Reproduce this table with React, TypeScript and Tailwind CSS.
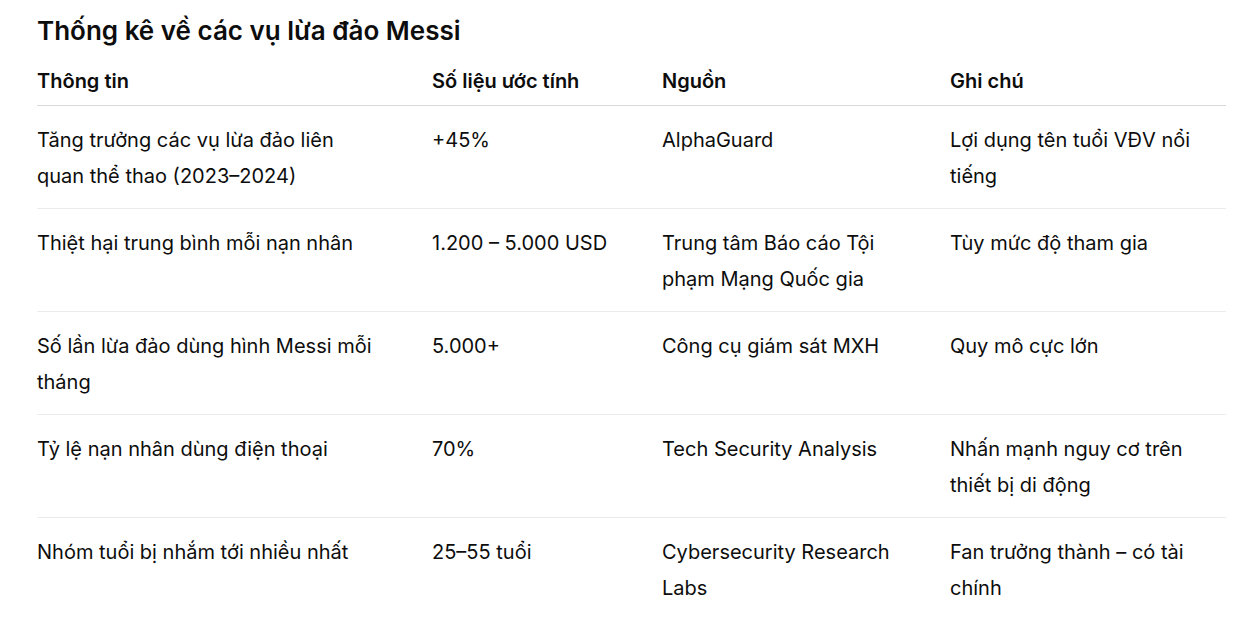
import React from 'react';

const rows = [
  ['Tăng trưởng các vụ lừa đảo liên quan thể thao (2023–2024)', '+45%', 'AlphaGuard', 'Lợi dụng tên tuổi VĐV nổi tiếng'],
  ['Thiệt hại trung bình mỗi nạn nhân', '1.200 – 5.000 USD', 'Trung tâm Báo cáo Tội phạm Mạng Quốc gia', 'Tùy mức độ tham gia'],
  ['Số lần lừa đảo dùng hình Messi mỗi tháng', '5.000+', 'Công cụ giám sát MXH', 'Quy mô cực lớn'],
  ['Tỷ lệ nạn nhân dùng điện thoại', '70%', 'Tech Security Analysis', 'Nhấn mạnh nguy cơ trên thiết bị di động'],
  ['Nhóm tuổi bị nhắm tới nhiều nhất', '25–55 tuổi', 'Cybersecurity Research Labs', 'Fan trưởng thành – có tài chính'],
];

const cols = 'grid grid-cols-[395px_230px_288px_276px]';

export default function App() {
  return (
    <div className="min-h-screen bg-white pl-[37px] pr-[26px] pt-[13px] text-[#0d0d0d] font-['Inter',sans-serif]">
      <h2 className="text-[26px] leading-[36px] font-semibold">Thống kê về các vụ lừa đảo Messi</h2>
      <div className="mt-[14px] w-[1189px]">
        <div className={`${cols} border-b border-[#d9d9d9] pb-[6px] text-[20px] leading-[36px] font-semibold`}>
          <div>Thông tin</div>
          <div>Số liệu ước tính</div>
          <div>Nguồn</div>
          <div>Ghi chú</div>
        </div>
        {rows.map((r, i) => (
          <div
            key={i}
            className={`${cols} ${i < rows.length - 1 ? 'border-b border-[#ececec]' : ''} pt-[16px] pb-[14px] text-[20px] leading-[36px] min-h-[103px]`}
          >
            {r.map((c, j) => (
              <div key={j} className={j === 0 ? 'pr-[50px]' : 'pr-[24px]'}>{c}</div>
            ))}
          </div>
        ))}
      </div>
    </div>
  );
}
